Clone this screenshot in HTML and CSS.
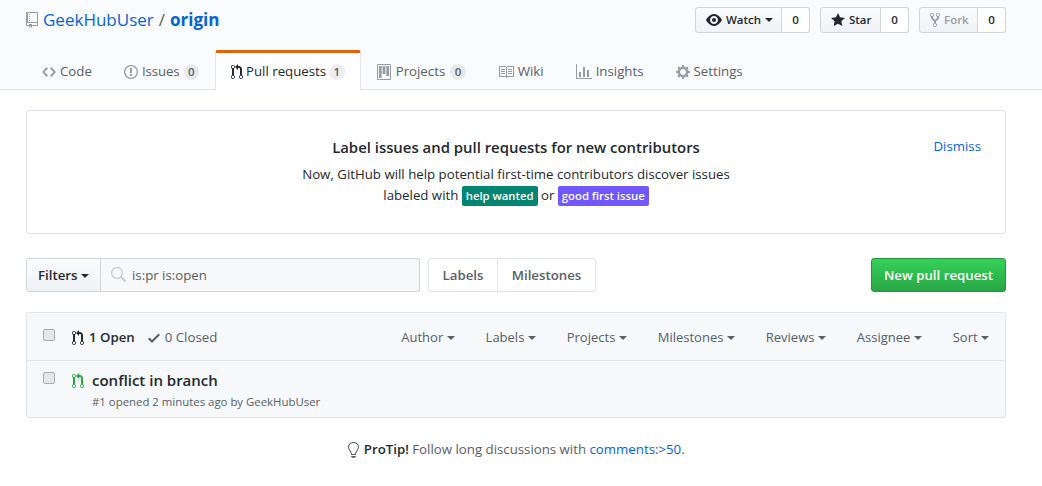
FILE: index.html
```html
<!DOCTYPE html>
<html>
<head>
    <title>Pull requests - GeekHubUser/origin</title>
    <link rel="stylesheet" href="styles.css">
</head>
<body>
    <header class="repohead">
        <div class="container repo-top">
            <h1 class="repo-title">
                <svg class="icon repo-icon" viewBox="0 0 12 16" width="12" height="16"><path d="M4 9H3V8h1v1zm0-3H3v1h1V6zm0-2H3v1h1V4zm0-2H3v1h1V2zm8-1v12c0 .55-.45 1-1 1H6v2l-1.5-1.5L3 16v-2H1c-.55 0-1-.45-1-1V1c0-.55.45-1 1-1h10c.55 0 1 .45 1 1zm-1 10H1v2h2v-1h3v1h5v-2zm0-10H2v9h9V1z"/></svg>
                <a href="#">GeekHubUser</a> <span class="slash">/</span> <a href="#"><strong>origin</strong></a>
            </h1>
            <ul class="repo-actions">
                <li class="counter-btn counter-watch">
                    <a class="btn-sm" href="#">
                        <svg class="icon" viewBox="0 0 16 16" width="16" height="16"><path d="M8.06 2C3 2 0 8 0 8s3 6 8.06 6C13 14 16 8 16 8s-3-6-7.94-6zM8 12c-2.2 0-4-1.78-4-4 0-2.2 1.8-4 4-4 2.22 0 4 1.8 4 4 0 2.22-1.78 4-4 4zm2-4c0 1.11-.89 2-2 2-1.11 0-2-.89-2-2 0-1.11.89-2 2-2 1.11 0 2 .89 2 2z"/></svg>
                        Watch <span class="caret"></span>
                    </a>
                    <a class="social-count" href="#">0</a>
                </li>
                <li class="counter-btn counter-star">
                    <a class="btn-sm" href="#">
                        <svg class="icon" viewBox="0 0 14 16" width="14" height="16"><path d="M14 6l-4.9-.64L7 1 4.9 5.36 0 6l3.6 3.26L2.67 14 7 11.67 11.33 14l-.93-4.74L14 6z"/></svg>
                        Star
                    </a>
                    <a class="social-count" href="#">0</a>
                </li>
                <li class="counter-btn counter-fork">
                    <a class="btn-sm disabled" href="#">
                        <svg class="icon" viewBox="0 0 10 16" width="10" height="16"><path d="M8 1a1.993 1.993 0 0 0-1 3.72V6L5 8 3 6V4.72A1.993 1.993 0 0 0 2 1a1.993 1.993 0 0 0-1 3.72V6.5l3 3v1.78A1.993 1.993 0 0 0 5 15a1.993 1.993 0 0 0 1-3.72V9.5l3-3V4.72A1.993 1.993 0 0 0 8 1zM2 4.2C1.34 4.2.8 3.65.8 3c0-.65.55-1.2 1.2-1.2.65 0 1.2.55 1.2 1.2 0 .65-.55 1.2-1.2 1.2zm3 10c-.66 0-1.2-.55-1.2-1.2 0-.65.55-1.2 1.2-1.2.65 0 1.2.55 1.2 1.2 0 .65-.55 1.2-1.2 1.2zm3-10c-.66 0-1.2-.55-1.2-1.2 0-.65.55-1.2 1.2-1.2.65 0 1.2.55 1.2 1.2 0 .65-.55 1.2-1.2 1.2z"/></svg>
                        Fork
                    </a>
                    <a class="social-count" href="#">0</a>
                </li>
            </ul>
        </div>
        <nav class="container tabs">
            <a class="tab" href="#">
                <svg class="icon" viewBox="0 0 14 16" width="14" height="16"><path d="M9.5 3L8 4.5 11.5 8 8 11.5 9.5 13 14 8 9.5 3zm-5 0L0 8l4.5 5L6 11.5 2.5 8 6 4.5 4.5 3z"/></svg>
                Code
            </a>
            <a class="tab tab-issues" href="#">
                <svg class="icon" viewBox="0 0 14 16" width="14" height="16"><path d="M7 2.3c3.14 0 5.7 2.56 5.7 5.7s-2.56 5.7-5.7 5.7A5.71 5.71 0 0 1 1.3 8c0-3.14 2.56-5.7 5.7-5.7zM7 1C3.14 1 0 4.14 0 8s3.14 7 7 7 7-3.14 7-7-3.14-7-7-7zm1 3H6v5h2V4zm0 6H6v2h2v-2z"/></svg>
                Issues <span class="counter">0</span>
            </a>
            <a class="tab selected" href="#">
                <svg class="icon" viewBox="0 0 12 16" width="12" height="16"><path d="M11 11.28V5c-.03-.78-.34-1.47-.94-2.06C9.46 2.35 8.78 2.03 8 2H7V0L4 3l3 3V4h1c.27.02.48.11.69.31.21.2.3.42.31.69v6.28A1.993 1.993 0 0 0 10 15a1.993 1.993 0 0 0 1-3.72zm-1 2.92c-.66 0-1.2-.55-1.2-1.2 0-.65.55-1.2 1.2-1.2.65 0 1.2.55 1.2 1.2 0 .65-.55 1.2-1.2 1.2zM4 3c0-1.11-.89-2-2-2a1.993 1.993 0 0 0-1 3.72v6.56A1.993 1.993 0 0 0 2 15a1.993 1.993 0 0 0 1-3.72V4.72c.59-.34 1-.98 1-1.72zm-.8 10c0 .66-.55 1.2-1.2 1.2-.65 0-1.2-.55-1.2-1.2 0-.65.55-1.2 1.2-1.2.65 0 1.2.55 1.2 1.2zM2 4.2C1.34 4.2.8 3.65.8 3c0-.65.55-1.2 1.2-1.2.65 0 1.2.55 1.2 1.2 0 .65-.55 1.2-1.2 1.2z"/></svg>
                Pull requests <span class="counter">1</span>
            </a>
            <a class="tab tab-projects" href="#">
                <svg class="icon" viewBox="0 0 15 16" width="14" height="16" preserveAspectRatio="none"><path d="M10 12h3V2h-3v10zm-4-2h3V2H6v8zm-4 4h3V2H2v12zm-1 1h13V1H1v14zM14 0H1a1 1 0 0 0-1 1v14a1 1 0 0 0 1 1h13a1 1 0 0 0 1-1V1a1 1 0 0 0-1-1z"/></svg>
                Projects <span class="counter">0</span>
            </a>
            <a class="tab" href="#">
                <svg class="icon" viewBox="0 0 16 16" width="16" height="16"><path d="M3 5h4v1H3V5zm0 3h4V7H3v1zm0 2h4V9H3v1zm11-5h-4v1h4V5zm0 2h-4v1h4V7zm0 2h-4v1h4V9zm2-6v9c0 .55-.45 1-1 1H9.5l-1 1-1-1H2c-.55 0-1-.45-1-1V3c0-.55.45-1 1-1h5.5l1 1 1-1H15c.55 0 1 .45 1 1zm-8 .5L7.5 3H2v9h6V3.5zm7-.5H9.5l-.5.5V12h6V3z"/></svg>
                Wiki
            </a>
            <a class="tab" href="#">
                <svg class="icon" viewBox="0 0 16 16" width="16" height="16"><path d="M16 14v1H0V0h1v14h15zM5 13H3V8h2v5zm4 0H7V3h2v10zm4 0h-2V6h2v7z"/></svg>
                Insights
            </a>
            <a class="tab" href="#">
                <svg class="icon" viewBox="0 0 14 16" width="14" height="16"><path d="M14 8.77v-1.6l-1.94-.64-.45-1.09.88-1.84-1.13-1.13-1.81.91-1.09-.45-.69-1.92h-1.6l-.63 1.94-1.11.45-1.84-.88-1.13 1.13.91 1.81-.45 1.09L0 7.23v1.59l1.94.64.45 1.09-.88 1.84 1.13 1.13 1.81-.91 1.09.45.69 1.92h1.59l.63-1.94 1.11-.45 1.84.88 1.13-1.13-.92-1.81.47-1.09L14 8.75v.02zM7 11c-1.66 0-3-1.34-3-3s1.34-3 3-3 3 1.34 3 3-1.34 3-3 3z"/></svg>
                Settings
            </a>
        </nav>
    </header>

    <main class="container">
        <section class="notice">
            <a class="dismiss" href="#">Dismiss</a>
            <h2>Label issues and pull requests for new contributors</h2>
            <p>Now, GitHub will help potential first-time contributors discover issues</p>
            <p>labeled with <span class="label label-green">help wanted</span> or <span class="label label-purple">good first issue</span></p>
        </section>

        <div class="filter-bar">
            <div class="search-group">
                <button class="filter-btn">Filters <span class="caret"></span></button>
                <div class="search-box">
                    <svg class="icon" viewBox="0 0 16 16" width="16" height="16"><path d="M15.7 13.3l-3.81-3.83A5.93 5.93 0 0 0 13 6c0-3.31-2.69-6-6-6S1 2.69 1 6s2.69 6 6 6c1.3 0 2.48-.41 3.47-1.11l3.83 3.81c.19.2.45.3.7.3.25 0 .52-.09.7-.3a.996.996 0 0 0 0-1.41v.01zM7 10.7c-2.59 0-4.7-2.11-4.7-4.7 0-2.59 2.11-4.7 4.7-4.7 2.59 0 4.7 2.11 4.7 4.7 0 2.59-2.11 4.7-4.7 4.7z"/></svg>
                    <span>is:pr is:open</span>
                </div>
            </div>
            <div class="nav-links">
                <a href="#">Labels</a>
                <a href="#">Milestones</a>
            </div>
            <a class="btn-primary" href="#">New pull request</a>
        </div>

        <section class="issues">
            <div class="issues-head">
                <input class="check" type="checkbox">
                <div class="states">
                    <a class="state-open" href="#">
                        <svg class="icon" viewBox="0 0 12 16" width="12" height="16"><path d="M11 11.28V5c-.03-.78-.34-1.47-.94-2.06C9.46 2.35 8.78 2.03 8 2H7V0L4 3l3 3V4h1c.27.02.48.11.69.31.21.2.3.42.31.69v6.28A1.993 1.993 0 0 0 10 15a1.993 1.993 0 0 0 1-3.72zm-1 2.92c-.66 0-1.2-.55-1.2-1.2 0-.65.55-1.2 1.2-1.2.65 0 1.2.55 1.2 1.2 0 .65-.55 1.2-1.2 1.2zM4 3c0-1.11-.89-2-2-2a1.993 1.993 0 0 0-1 3.72v6.56A1.993 1.993 0 0 0 2 15a1.993 1.993 0 0 0 1-3.72V4.72c.59-.34 1-.98 1-1.72zm-.8 10c0 .66-.55 1.2-1.2 1.2-.65 0-1.2-.55-1.2-1.2 0-.65.55-1.2 1.2-1.2.65 0 1.2.55 1.2 1.2zM2 4.2C1.34 4.2.8 3.65.8 3c0-.65.55-1.2 1.2-1.2.65 0 1.2.55 1.2 1.2 0 .65-.55 1.2-1.2 1.2z"/></svg>
                        1 Open
                    </a>
                    <a class="state-closed" href="#">
                        <svg class="icon" viewBox="0 0 12 16" width="12" height="16"><path d="M12 5l-8 8-4-4 1.5-1.5L4 10l6.5-6.5L12 5z"/></svg>
                        0 Closed
                    </a>
                </div>
                <div class="sorts">
                    <a href="#">Author <span class="caret"></span></a>
                    <a href="#">Labels <span class="caret"></span></a>
                    <a href="#">Projects <span class="caret"></span></a>
                    <a href="#">Milestones <span class="caret"></span></a>
                    <a href="#">Reviews <span class="caret"></span></a>
                    <a href="#">Assignee <span class="caret"></span></a>
                    <a href="#">Sort <span class="caret"></span></a>
                </div>
            </div>
            <div class="issue-row">
                <input class="check" type="checkbox">
                <svg class="icon pr-open" viewBox="0 0 12 16" width="12" height="16"><path d="M11 11.28V5c-.03-.78-.34-1.47-.94-2.06C9.46 2.35 8.78 2.03 8 2H7V0L4 3l3 3V4h1c.27.02.48.11.69.31.21.2.3.42.31.69v6.28A1.993 1.993 0 0 0 10 15a1.993 1.993 0 0 0 1-3.72zm-1 2.92c-.66 0-1.2-.55-1.2-1.2 0-.65.55-1.2 1.2-1.2.65 0 1.2.55 1.2 1.2 0 .65-.55 1.2-1.2 1.2zM4 3c0-1.11-.89-2-2-2a1.993 1.993 0 0 0-1 3.72v6.56A1.993 1.993 0 0 0 2 15a1.993 1.993 0 0 0 1-3.72V4.72c.59-.34 1-.98 1-1.72zm-.8 10c0 .66-.55 1.2-1.2 1.2-.65 0-1.2-.55-1.2-1.2 0-.65.55-1.2 1.2-1.2.65 0 1.2.55 1.2 1.2zM2 4.2C1.34 4.2.8 3.65.8 3c0-.65.55-1.2 1.2-1.2.65 0 1.2.55 1.2 1.2 0 .65-.55 1.2-1.2 1.2z"/></svg>
                <div class="issue-text">
                    <a class="issue-title" href="#">conflict in branch</a>
                    <div class="issue-meta">#1 opened 2 minutes ago by GeekHubUser</div>
                </div>
            </div>
        </section>

        <p class="protip">
            <svg class="icon" viewBox="0 0 12 16" width="12" height="16"><path d="M6.5 0C3.48 0 1 2.19 1 5c0 .92.55 2.25 1 3 1.34 2.25 1.78 2.78 2 4v1h5v-1c.22-1.22.66-1.75 2-4 .45-.75 1-2.08 1-3 0-2.81-2.48-5-5.5-5zm3.64 7.48c-.25.44-.47.8-.67 1.11-.86 1.41-1.25 2.06-1.45 3.23-.02.05-.02.11-.02.17H5c0-.06 0-.13-.02-.17-.2-1.17-.59-1.83-1.45-3.23-.2-.31-.42-.67-.67-1.11C2.44 6.78 2 5.65 2 5c0-2.2 2.02-4 4.5-4 1.22 0 2.36.42 3.22 1.19C10.55 2.94 11 3.94 11 5c0 .66-.44 1.78-.86 2.48zM4 14h5c-.23 1.14-1.3 2-2.5 2s-2.27-.86-2.5-2z"/></svg>
            <strong>ProTip!</strong> Follow long discussions with <a href="#">comments:&gt;50</a>.
        </p>
    </main>
</body>
</html>
```

FILE: styles.css
```css
* {
    box-sizing: border-box;
}

body {
    font-family: "Open Sans", "Noto Sans", "Liberation Sans", sans-serif;
    font-size: 13.25px;
    line-height: 1.5;
    color: #24292e;
    background: #fff;
    margin: 0;
}

a {
    color: #0366d6;
    text-decoration: none;
}

.container {
    width: 980px;
    margin: 0 0 0 26px;
}

.icon {
    fill: currentColor;
    fill-rule: evenodd;
    flex: none;
}

.caret {
    display: inline-block;
    width: 0;
    height: 0;
    vertical-align: middle;
    border-top: 4px solid;
    border-left: 4px solid transparent;
    border-right: 4px solid transparent;
}

/* repo header */
.repohead {
    height: 90px;
    background: #fafbfc;
    border-bottom: 1px solid #e1e4e8;
}

.repo-top {
    display: flex;
    justify-content: space-between;
    align-items: flex-start;
    height: 50px;
    padding-top: 7px;
}

.repo-title {
    display: flex;
    align-items: center;
    gap: 5px;
    margin: 0;
    height: 26px;
    font-size: 17px;
    font-weight: 400;
    color: #586069;
}

.repo-icon {
    color: #959da5;
}

.repo-actions {
    display: flex;
    gap: 10px;
    list-style: none;
    margin: 0;
    padding: 0;
}

.counter-btn {
    display: flex;
    height: 26px;
    font-size: 11.5px;
    font-weight: 600;
}

.btn-sm {
    display: flex;
    align-items: center;
    gap: 4px;
    color: #24292e;
    background: linear-gradient(#fafbfc, #eff3f6);
    border: 1px solid #d1d5da;
    border-radius: 3px 0 0 3px;
}

.counter-watch .btn-sm { width: 87px; padding-left: 10px; }
.counter-star .btn-sm { width: 61px; padding-left: 10px; }
.counter-fork .btn-sm { width: 59px; padding-left: 10px; }

.btn-sm.disabled {
    color: #959da5;
}

.social-count {
    width: 28px;
    display: flex;
    align-items: center;
    justify-content: center;
    color: #24292e;
    background: #fff;
    border: 1px solid #d1d5da;
    border-left: 0;
    border-radius: 0 3px 3px 0;
}

/* tabs */
.tabs {
    display: flex;
    height: 40px;
}

.tab {
    display: flex;
    align-items: center;
    gap: 4px;
    height: 40px;
    padding: 0 15px;
    color: #586069;
    border-top: 3px solid transparent;
    border-left: 1px solid transparent;
    border-right: 1px solid transparent;
}

.tab .icon {
    color: #959da5;
}

.tab-issues {
    letter-spacing: -.1px;
}

.tab-projects {
    gap: 5px;
}

.tab.selected {
    gap: 3px;
    color: #24292e;
    background: #fff;
    border-top-color: #e36209;
    border-left-color: #e1e4e8;
    border-right-color: #e1e4e8;
    border-radius: 3px 3px 0 0;
}

.tab.selected .icon {
    color: #24292e;
}

.counter {
    display: inline-block;
    padding: 0 4.5px;
    font-size: 11.5px;
    font-weight: 600;
    line-height: 16px;
    text-align: center;
    color: #586069;
    background: rgba(27, 31, 35, .08);
    border-radius: 20px;
}

/* notice */
.notice {
    position: relative;
    height: 124px;
    margin-top: 20px;
    padding-top: 24px;
    text-align: center;
    border: 1px solid #e1e4e8;
    border-radius: 3px;
}

.notice h2 {
    margin: 0 0 5px;
    font-size: 14.9px;
    font-weight: 600;
    line-height: 24px;
}

.notice p {
    margin: 0;
    line-height: 21px;
    color: #24292e;
}

.dismiss {
    position: absolute;
    top: 26px;
    right: 24px;
}

.label {
    display: inline-block;
    padding: 0 4px;
    font-size: 11.3px;
    font-weight: 600;
    line-height: 20px;
    color: #fff;
    border-radius: 2px;
}

.label-green { background: #008672; }
.label-purple { background: #7057ff; }

/* filter bar */
.filter-bar {
    display: flex;
    margin-top: 24px;
    height: 34px;
}

.search-group {
    display: flex;
    width: 394px;
}

.filter-btn {
    width: 75px;
    font: inherit;
    font-weight: 600;
    color: #24292e;
    background: linear-gradient(#fafbfc, #eff3f6);
    border: 1px solid #d1d5da;
    border-radius: 3px 0 0 3px;
    padding: 1px 0 0;
}

.search-box {
    display: flex;
    align-items: center;
    gap: 6px;
    flex: 1;
    padding-left: 9px;
    color: #586069;
    background: #f6f8fa;
    border: 1px solid #d1d5da;
    border-left: 0;
    border-radius: 0 3px 3px 0;
}

.search-box span {
    padding-top: 1px;
}

.search-box .icon {
    color: #c6cbd1;
}

.nav-links {
    display: flex;
    margin-left: 8px;
    border: 1px solid #e1e4e8;
    border-radius: 3px;
}

.nav-links a {
    display: flex;
    align-items: center;
    justify-content: center;
    padding-top: 1px;
    font-weight: 600;
    color: #586069;
}

.nav-links a:first-child {
    width: 69px;
    border-right: 1px solid #e1e4e8;
}

.nav-links a:last-child {
    width: 97px;
}

.btn-primary {
    display: flex;
    align-items: center;
    justify-content: center;
    width: 135px;
    margin-left: auto;
    padding-top: 1px;
    font-weight: 600;
    color: #fff;
    background: linear-gradient(#34d058, #28a745);
    border: 1px solid #25963f;
    border-radius: 3px;
}

/* issues */
.issues {
    margin-top: 20px;
    background: #f6f8fa;
    border: 1px solid #e1e4e8;
    border-radius: 3px;
}

.check {
    appearance: none;
    flex: none;
    width: 12px;
    height: 12px;
    margin: 0;
    background: #e6e6e6;
    border: 1px solid #ababab;
    border-radius: 2px;
}

.issues-head {
    display: flex;
    align-items: center;
    height: 48px;
    padding: 2px 16px 0;
    border-bottom: 1px solid #e1e4e8;
}

.issues-head .check {
    margin-top: -6px;
}

.states {
    display: flex;
    gap: 13px;
    margin-left: 17px;
}

.states a {
    display: flex;
    align-items: center;
    gap: 5px;
}

.state-open {
    font-weight: 600;
    color: #24292e;
}

.state-closed {
    color: #586069;
}

.sorts {
    display: flex;
    gap: 31px;
    margin-left: auto;
    font-size: 13px;
}

.sorts a {
    color: #586069;
}

.issue-row {
    display: flex;
    align-items: flex-start;
    height: 56px;
    padding: 9px 16px 0;
}

.issue-row .check {
    margin-top: 2px;
}

.pr-open {
    margin: 3px 8px 0 17px;
    color: #28a745;
}

.issue-title {
    display: block;
    font-size: 15px;
    font-weight: 600;
    line-height: 20px;
    color: #24292e;
}

.issue-meta {
    margin-top: 3px;
    font-size: 11.4px;
    line-height: 18px;
    color: #586069;
}

.protip {
    margin: 22px 0 0;
    text-align: center;
    color: #586069;
}

.protip .icon {
    vertical-align: text-bottom;
    margin-right: 1px;
}

.protip strong {
    color: #24292e;
    font-weight: 600;
}
```
